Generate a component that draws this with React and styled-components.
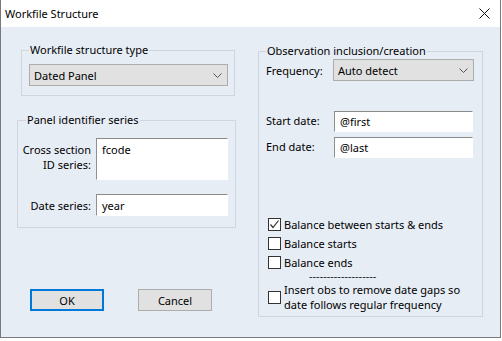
import React from 'react';
import styled, { createGlobalStyle } from 'styled-components';

const Global = createGlobalStyle`
    html, body {
        margin: 0;
        padding: 0;
        background: #ffffff;
    }
    body {
        font-family: 'Segoe UI', 'Noto Sans', sans-serif;
        font-size: 11px;
        color: #000;
        white-space: nowrap;
    }
`;

const Window = styled.div`
    width: 501px;
    height: 338px;
    box-sizing: border-box;
    border: 1px solid #7a7a7a;
    border-top: none;
    background: #e7edf5;
    display: flex;
    flex-direction: column;
`;

const TitleBar = styled.div`
    height: 27px;
    background: #fff;
    display: flex;
    align-items: center;
    justify-content: space-between;
    padding: 0 10px 0 4px;
    flex-shrink: 0;
`;

const Title = styled.span`
    font-size: 11px;
    line-height: 16px;
`;

const Body = styled.div`
    display: flex;
    padding: 15px 0 0 16px;
    gap: 22px;
`;

const Column = styled.div`
    display: flex;
    flex-direction: column;
    align-items: flex-start;
`;

const Group = styled.fieldset`
    margin: ${({ $m }) => $m || 0};
    padding: ${({ $p }) => $p || 0};
    width: ${({ $w }) => $w}px;
    height: ${({ $h }) => $h}px;
    box-sizing: border-box;
    border: 1px solid #d0d6df;
    min-width: 0;
`;

const Legend = styled.legend`
    padding: 0 1px;
    margin-left: ${({ $ml }) => $ml || 0}px;
    line-height: 16px;
`;

const Select = styled.div`
    width: ${({ $w }) => $w}px;
    height: 22px;
    box-sizing: border-box;
    border: 1px solid #adadad;
    background: #e1e1e1;
    display: flex;
    align-items: center;
    justify-content: space-between;
    padding: 0 5px 0 4px;
    margin-top: ${({ $mt }) => $mt || 0}px;
`;

const Chevron = () => (
    <svg width="9" height="5" viewBox="0 0 9 5">
        <path d="M0.5 0.5 L4.5 4.5 L8.5 0.5" fill="none" stroke="#555" strokeWidth="1" />
    </svg>
);

const FieldGrid = styled.div`
    display: grid;
    grid-template-columns: 73px 132px;
    column-gap: 5px;
    row-gap: 14px;
    margin-top: 10px;
`;

const SideLabel = styled.div`
    text-align: right;
    line-height: 15px;
    padding-top: ${({ $pt }) => $pt || 0}px;
    align-self: ${({ $center }) => ($center ? 'center' : 'start')};
`;

const TextBox = styled.div`
    width: ${({ $w }) => ($w ? `${$w}px` : 'auto')};
    height: ${({ $h }) => $h}px;
    box-sizing: border-box;
    background: #fff;
    border-style: solid;
    border-width: 1px;
    border-color: #8a8a8a #fff #fff #8f8f8f;
    padding: ${({ $tall }) => ($tall ? '3px 5px' : '0 5px')};
    display: flex;
    align-items: ${({ $tall }) => ($tall ? 'flex-start' : 'center')};
    line-height: 15px;
`;

const ButtonRow = styled.div`
    display: flex;
    gap: 34px;
    margin: 61px 0 0 13px;
`;

const Button = styled.div`
    width: 74px;
    height: 22px;
    box-sizing: border-box;
    background: #e1e1e1;
    border: ${({ $default }) => ($default ? '2px solid #0078d7' : '1px solid #adadad')};
    display: flex;
    align-items: center;
    justify-content: center;
`;

const Row = styled.div`
    display: flex;
    align-items: ${({ $top }) => ($top ? 'flex-start' : 'center')};
    margin-top: ${({ $mt }) => $mt || 0}px;
`;

const RowLabel = styled.div`
    width: ${({ $w }) => $w}px;
    padding-top: ${({ $pt }) => $pt || 0}px;
    line-height: 15px;
    flex-shrink: 0;
`;

const CheckList = styled.div`
    display: flex;
    flex-direction: column;
    gap: 4px;
    margin: ${({ $mt }) => $mt}px 0 0 2px;
`;

const CheckRow = styled.div`
    display: flex;
    align-items: center;
    gap: 3px;
    line-height: 15px;
`;

const Box = styled.span`
    width: 13px;
    height: 13px;
    box-sizing: border-box;
    border: 1px solid #333;
    background: #fff;
    flex-shrink: 0;
    display: flex;
    align-items: center;
    justify-content: center;
`;

const Separator = styled.div`
    margin: -1px 0 -1px 41px;
    line-height: 6px;
    height: 6px;
    font-size: 11px;
    color: #222;
`;

const Check = ({ checked, children }) => (
    <CheckRow>
        <Box>
            {checked && (
                <svg width="11" height="11" viewBox="0 0 11 11">
                    <path d="M1.5 5.5 L4 8.5 L9.5 1.5" fill="none" stroke="#333" strokeWidth="1.2" />
                </svg>
            )}
        </Box>
        <span>{children}</span>
    </CheckRow>
);

const App = () => {
    return (
        <>
            <Global />
            <Window>
                <TitleBar>
                    <Title>Workfile Structure</Title>
                    <svg width="11" height="11" viewBox="0 0 11 11">
                        <path d="M0.5 0.5 L10.5 10.5 M10.5 0.5 L0.5 10.5" stroke="#111" strokeWidth="1" />
                    </svg>
                </TitleBar>
                <Body>
                    <Column>
                        <Group $w={214} $h={54} $m="0 0 0 4px" $p="0 6px 0 7px">
                            <Legend>Workfile structure type</Legend>
                            <Select $w={199} $mt={6}>
                                <span>Dated Panel</span>
                                <Chevron />
                            </Select>
                        </Group>
                        <Group $w={219} $h={116} $m="16px 0 0 0" $p="0 6px 0 0">
                            <Legend $ml={8}>Panel identifier series</Legend>
                            <FieldGrid>
                                <SideLabel $pt={4}>Cross section<br />ID series:</SideLabel>
                                <TextBox $h={42} $tall>fcode</TextBox>
                                <SideLabel $center>Date series:</SideLabel>
                                <TextBox $h={22}>year</TextBox>
                            </FieldGrid>
                        </Group>
                        <ButtonRow>
                            <Button $default>OK</Button>
                            <Button>Cancel</Button>
                        </ButtonRow>
                    </Column>
                    <Column>
                        <Group $w={225} $h={274} $m="1px 0 0 0" $p="0 8px 0 7px">
                            <Legend>Observation inclusion/creation</Legend>
                            <Row>
                                <RowLabel $w={67}>Frequency:</RowLabel>
                                <Select $w={141}>
                                    <span>Auto detect</span>
                                    <Chevron />
                                </Select>
                            </Row>
                            <Row $top $mt={30}>
                                <RowLabel $w={68} $pt={2}>Start date:</RowLabel>
                                <TextBox $w={139} $h={21}>@first</TextBox>
                            </Row>
                            <Row $top $mt={5}>
                                <RowLabel $w={68} $pt={2}>End date:</RowLabel>
                                <TextBox $w={139} $h={21}>@last</TextBox>
                            </Row>
                            <CheckList $mt={59}>
                                <Check checked>Balance between starts &amp; ends</Check>
                                <Check>Balance starts</Check>
                                <Check>Balance ends</Check>
                                <Separator>-------------------</Separator>
                                <Check>Insert obs to remove date gaps so<br />date follows regular frequency</Check>
                            </CheckList>
                        </Group>
                    </Column>
                </Body>
            </Window>
        </>
    );
};

export default App;
